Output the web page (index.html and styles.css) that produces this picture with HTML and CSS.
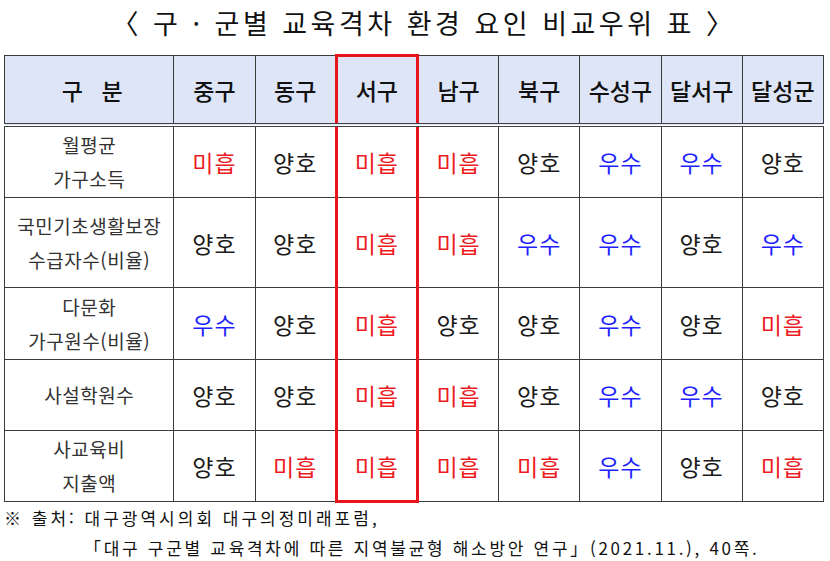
FILE: index.html
```html
<!DOCTYPE html>
<html lang="ko">
<head>
<meta charset="utf-8">
<link rel="stylesheet" href="styles.css">
</head>
<body>
<div class="page">
  <h1 class="title">〈 구 · 군별 교육격차 환경 요인 비교우위 표 〉</h1>
  <table class="grid">
    <colgroup>
      <col class="c-label"><col class="c-val"><col class="c-val"><col class="c-val"><col class="c-val"><col class="c-val"><col class="c-val"><col class="c-val"><col class="c-val">
    </colgroup>
    <thead>
      <tr class="head">
        <th class="gubun">구 분</th><th>중구</th><th>동구</th><th class="hl">서구</th><th>남구</th><th>북구</th><th>수성구</th><th>달서구</th><th>달성군</th>
      </tr>
    </thead>
    <tbody>
      <tr class="r1">
        <th class="label">월평균<br>가구소득</th>
        <td class="bad">미흡</td><td>양호</td><td class="hl bad">미흡</td><td class="bad">미흡</td><td>양호</td><td class="good">우수</td><td class="good">우수</td><td>양호</td>
      </tr>
      <tr class="r2">
        <th class="label">국민기초생활보장<br>수급자수(비율)</th>
        <td>양호</td><td>양호</td><td class="hl bad">미흡</td><td class="bad">미흡</td><td class="good">우수</td><td class="good">우수</td><td>양호</td><td class="good">우수</td>
      </tr>
      <tr class="r3">
        <th class="label">다문화<br>가구원수(비율)</th>
        <td class="good">우수</td><td>양호</td><td class="hl bad">미흡</td><td>양호</td><td>양호</td><td class="good">우수</td><td>양호</td><td class="bad">미흡</td>
      </tr>
      <tr class="r4">
        <th class="label">사설학원수</th>
        <td>양호</td><td>양호</td><td class="hl bad">미흡</td><td class="bad">미흡</td><td>양호</td><td class="good">우수</td><td class="good">우수</td><td>양호</td>
      </tr>
      <tr class="r5">
        <th class="label">사교육비<br>지출액</th>
        <td>양호</td><td class="bad">미흡</td><td class="hl bad">미흡</td><td class="bad">미흡</td><td class="bad">미흡</td><td class="good">우수</td><td>양호</td><td class="bad">미흡</td>
      </tr>
    </tbody>
  </table>
  <div class="source">
    <p class="src1">※ 출처: 대구광역시의회 대구의정미래포럼,</p>
    <p class="src2">「대구 구군별 교육격차에 따른 지역불균형 해소방안 연구」(2021.11.), 40쪽.</p>
  </div>
</div>
</body>
</html>
```

FILE: styles.css
```css
html, body {
  margin: 0;
  padding: 0;
  background: #ffffff;
}
body {
  font-family: "Noto Sans CJK KR", "Noto Sans", sans-serif;
  color: #1a1a1a;
}
.page {
  width: 830px;
  height: 561px;
  overflow: hidden;
}
.title {
  margin: 0;
  height: 54px;
  padding-left: 18px;
  line-height: 46px;
  text-align: center;
  font-size: 27px;
  font-weight: 400;
  letter-spacing: 3.5px;
  color: #111;
}
.grid {
  margin-left: 4px;
  border-collapse: collapse;
  table-layout: fixed;
  width: 820px;
}
.c-label { width: 169px; }
.c-val { width: 81px; }
.grid th, .grid td {
  border: 1px solid #3a3a3a;
  text-align: center;
  vertical-align: middle;
  padding: 0;
  font-size: 23px;
  font-weight: 400;
  letter-spacing: 1px;
  color: #1a1a1a;
}
.head th {
  background: #dde5f6;
  height: 66px;
  border-bottom: 4px double #444;
  font-weight: 500;
  letter-spacing: 0;
  color: #111;
}
.head th.gubun {
  letter-spacing: 6px;
  padding-left: 12px;
}
.grid th.label {
  font-size: 19px;
  line-height: 34px;
  letter-spacing: 0.5px;
  color: #333;
  font-weight: 400;
}
.r1 th, .r1 td { height: 70px; }
.r2 th, .r2 td { height: 89px; }
.r3 th, .r3 td { height: 71px; }
.r4 th, .r4 td { height: 70px; }
.r5 th, .r5 td { height: 69px; }
.grid .bad { color: #ec1c24; }
.grid .good { color: #1f1fff; }
.grid .hl {
  border-left: 3px solid #e8141b;
  border-right: 3px solid #e8141b;
}
.grid .head .hl { border-top: 3px solid #e8141b; }
.grid .r5 .hl { border-bottom: 3px solid #e8141b; }
.source {
  font-size: 17px;
  letter-spacing: 3px;
  color: #111;
}
.source p {
  margin: 0;
  line-height: 30px;
  height: 30px;
}
.src1 { padding-left: 4px; }
.src2 { padding-left: 84px; letter-spacing: 2.7px; }
```
